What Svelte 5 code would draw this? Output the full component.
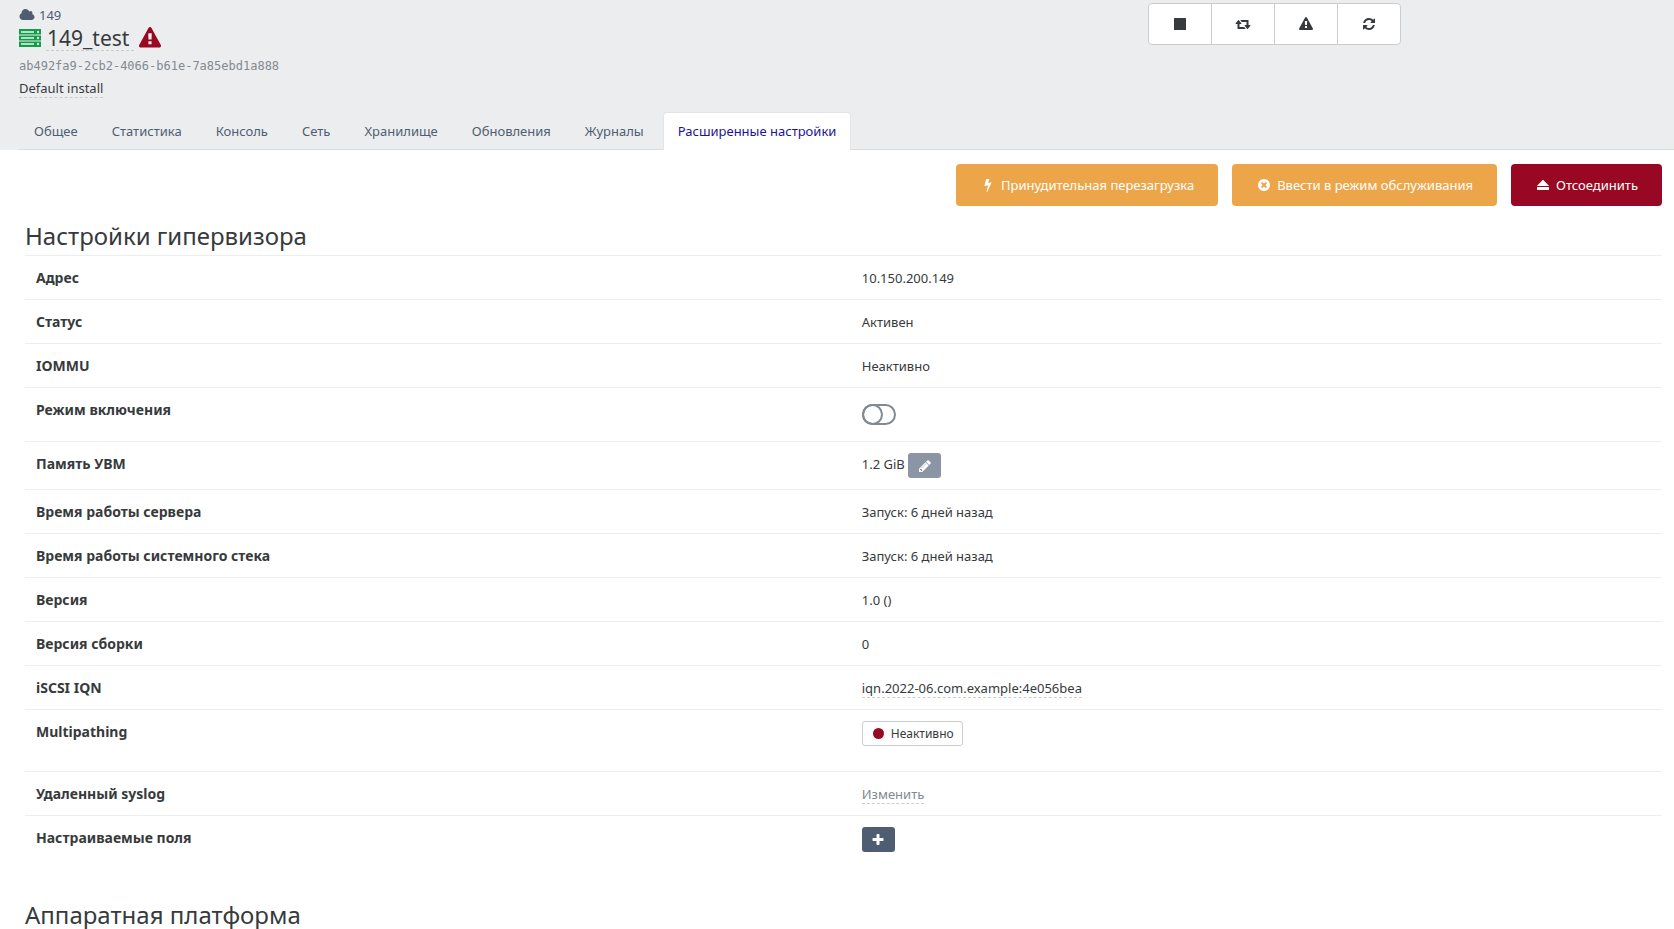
<script>
  // Advanced tab of a host page: header with tabs, actions, settings table.
  const icons = {
    cloud: {
      w: 2048,
      d: "M1984 1152q0 159-112.5 271.5t-271.5 112.5h-1088q-185 0-316.5-131.5t-131.5-316.5q0-132 71-241.5t187-163.5q-2-28-2-43 0-212 150-362t362-150q158 0 286.5 88t187.5 230q70-62 166-62 106 0 181 75t75 181q0 75-41 138 129 30 213 134.5t84 239.5z",
    },
    warning: {
      w: 1792,
      d: "M1024 1375v-190q0-14-9.5-23.5t-22.5-9.5h-192q-13 0-22.5 9.5t-9.5 23.5v190q0 14 9.5 23.5t22.5 9.5h192q13 0 22.5-9.5t9.5-23.5zm-2-374l18-459q0-12-10-19-13-11-24-11h-220q-11 0-24 11-10 7-10 21l17 457q0 10 10 16.5t24 6.5h185q14 0 23.5-6.5t10.5-16.5zm-14-934l768 1408q35 63-2 126-17 29-46.5 46t-63.5 17h-1536q-34 0-63.5-17t-46.5-46q-37-63-2-126l768-1408q17-31 47-49t65-18 65 18 47 49z",
    },
    stop: { w: 1792, d: "M192 128h1408q64 0 64 64v1408q0 64-64 64h-1408q-64 0-64-64v-1408q0-64 64-64z" },
    retweet: {
      w: 2048,
      d: "M1344 1504q0 13-9.5 22.5t-22.5 9.5h-960q-8 0-13.5-2t-9-7-5.5-8-3-11.5-1-11.5v-600h-192q-26 0-45-19t-19-45q0-24 15-41l320-384q19-22 49-22t49 22l320 384q15 17 15 41 0 26-19 45t-45 19h-192v384h576q16 0 25 11l160 192q7 10 7 21zm640-416q0 24-15 41l-320 384q-20 23-49 23t-49-23l-320-384q-15-17-15-41 0-26 19-45t45-19h192v-384h-576q-16 0-25-12l-160-192q-7-9-7-20 0-13 9.5-22.5t22.5-9.5h960q8 0 13.5 2t9 7 5.5 8 3 11.5 1 11.5v600h192q26 0 45 19t19 45z",
    },
    refresh: {
      w: 1792,
      d: "M1639 1056q0 5-1 7-64 268-268 434.5t-478 166.5q-146 0-282.5-55t-243.5-157l-129 129q-19 19-45 19t-45-19-19-45v-448q0-26 19-45t45-19h448q26 0 45 19t19 45-19 45l-137 137q71 66 161 102t187 36q134 0 250-65t186-179q11-17 53-117 8-23 30-23h192q13 0 22.5 9.5t9.5 22.5zm25-800v448q0 26-19 45t-45 19h-448q-26 0-45-19t-19-45 19-45l138-138q-148-137-349-137-134 0-250 65t-186 179q-11 17-53 117-8 23-30 23h-199q-13 0-22.5-9.5t-9.5-22.5v-7q65-268 270-434.5t480-166.5q146 0 284 55.5t245 156.5l130-129q19-19 45-19t45 19 19 45z",
    },
    bolt: {
      w: 1792,
      d: "M1333 566q18 20 7 44l-540 1157q-13 25-42 25-4 0-14-2-17-5-25.5-19t-4.5-30l197-808-406 101q-4 1-12 1-18 0-31-11-18-15-13-39l201-825q4-16 16-26t28-10h328q19 0 32 12.5t13 29.5q0 8-5 18l-171 463 396-98q8-2 12-2 19 0 34 15z",
    },
    cross: {
      w: 1792,
      d: "M1277 1122q0-26-19-45l-181-181 181-181q19-19 19-45 0-27-19-46l-90-90q-19-19-46-19-26 0-45 19l-181 181-181-181q-19-19-45-19-27 0-46 19l-90 90q-19 19-19 46 0 26 19 45l181 181-181 181q-19 19-19 45 0 27 19 46l90 90q19 19 46 19 26 0 45-19l181-181 181 181q19 19 45 19 27 0 46-19l90-90q19-19 19-46zm387-226q0 209-103 385.5t-279.5 279.5-385.5 103-385.5-103-279.5-279.5-103-385.5 103-385.5 279.5-279.5 385.5-103 385.5 103 279.5 279.5 103 385.5z",
    },
    eject: {
      w: 1792,
      d: "M140 979l710-710q19-19 45-19t45 19l710 710q19 19 13 32t-32 13h-1472q-26 0-32-13t13-32zm1459 557h-1408q-26 0-45-19t-19-45v-256q0-26 19-45t45-19h1408q26 0 45 19t19 45v256q0 26-19 45t-45 19z",
    },
    pencil: {
      w: 1792,
      d: "M491 1536l91-91-235-235-91 91v107h128v128h107zm523-928q0-22-22-22-10 0-17 7l-542 542q-7 7-7 17 0 22 22 22 10 0 17-7l542-542q7-7 7-17zm-54-192l416 416-832 832h-416v-416zm683 96q0 53-37 90l-166 166-416-416 166-165q36-38 90-38 53 0 91 38l235 234q37 39 37 91z",
    },
    plus: {
      w: 1792,
      d: "M1600 736v192q0 40-28 68t-68 28h-416v416q0 40-28 68t-68 28h-192q-40 0-68-28t-28-68v-416h-416q-40 0-68-28t-28-68v-192q0-40 28-68t68-28h416v-416q0-40 28-68t68-28h192q40 0 68 28t28 68v416h416q40 0 68 28t28 68z",
    },
  };

  const tabs = [
    "Общее",
    "Статистика",
    "Консоль",
    "Сеть",
    "Хранилище",
    "Обновления",
    "Журналы",
    "Расширенные настройки",
  ];
  let current = $state("Расширенные настройки");

  const hostActions = [
    { icon: "stop", label: "Выключить" },
    { icon: "retweet", label: "Перезапустить стек" },
    { icon: "warning", label: "Аварийный режим" },
    { icon: "refresh", label: "Перезагрузить" },
  ];

  const actions = [
    { icon: "bolt", label: "Принудительная перезагрузка", style: "warning" },
    { icon: "cross", label: "Ввести в режим обслуживания", style: "warning" },
    { icon: "eject", label: "Отсоединить", style: "danger" },
  ];

  const settings = [
    { name: "Адрес", value: "10.150.200.149" },
    { name: "Статус", value: "Активен" },
    { name: "IOMMU", value: "Неактивно" },
    { name: "Режим включения", type: "toggle" },
    { name: "Память УВМ", value: "1.2 GiB", type: "memory" },
    { name: "Время работы сервера", value: "Запуск: 6 дней назад" },
    { name: "Время работы системного стека", value: "Запуск: 6 дней назад" },
    { name: "Версия", value: "1.0 ()" },
    { name: "Версия сборки", value: "0" },
    { name: "iSCSI IQN", value: "iqn.2022-06.com.example:4e056bea", type: "text" },
    { name: "Multipathing", value: "Неактивно", type: "state" },
    { name: "Удаленный syslog", value: "Изменить", type: "placeholder" },
    { name: "Настраиваемые поля", type: "add" },
  ];

  let powerOn = $state(false);
</script>

{#snippet icon(name)}
  <svg class="icon" viewBox="0 0 {icons[name].w} 1792" aria-hidden="true">
    <path d={icons[name].d} />
  </svg>
{/snippet}

<header>
  <div class="top">
    <div class="host">
      <a class="pool" href="#pool">{@render icon("cloud")}149</a>
      <h1>
        <svg class="server" viewBox="0 0 22 18" aria-hidden="true">
          {#each [0, 6, 12] as y}
            <rect x="0" {y} width="22" height="6" fill="#0f9d4a" />
            <rect x="2" y={y + 2} width="13" height="2" fill="#b5dfc5" />
            <circle cx="19" cy={y + 3} r="1.2" fill="#d9f0e1" />
          {/each}
          <path d="M0 6h22M0 12h22" stroke="#ecedef" stroke-width="1" />
        </svg>
        <span class="title">149_test</span>
        <span class="alert">{@render icon("warning")}</span>
      </h1>
      <div class="uuid">ab492fa9-2cb2-4066-b61e-7a85ebd1a888</div>
      <div class="description"><span class="editable">Default install</span></div>
    </div>
    <div class="group">
      {#each hostActions as a}
        <button type="button" aria-label={a.label}>{@render icon(a.icon)}</button>
      {/each}
    </div>
  </div>
  <nav>
    {#each tabs as tab}
      <a href="#tab" class:active={tab === current} onclick={() => (current = tab)}>{tab}</a>
    {/each}
  </nav>
</header>

<main>
  <div class="actions">
    {#each actions as a}
      <button type="button" class="btn {a.style}">{@render icon(a.icon)}{a.label}</button>
    {/each}
  </div>

  <h2>Настройки гипервизора</h2>
  <table>
    <tbody>
      {#each settings as s}
        <tr>
          <th scope="row">{s.name}</th>
          <td class={s.type}>
            {#if s.type === "toggle"}
              <label class="switch">
                <input type="checkbox" aria-label={s.name} bind:checked={powerOn} />
              </label>
            {:else if s.type === "memory"}
              {s.value}
              <button type="button" class="small muted" aria-label="Изменить память">
                {@render icon("pencil")}
              </button>
            {:else if s.type === "state"}
              <button type="button" class="badge"><i></i>{s.value}</button>
            {:else if s.type === "add"}
              <button type="button" class="small" aria-label="Добавить поле">
                {@render icon("plus")}
              </button>
            {:else if s.type}
              <span class="editable">{s.value}</span>
            {:else}
              {s.value}
            {/if}
          </td>
        </tr>
      {/each}
    </tbody>
  </table>

  <h2>Аппаратная платформа</h2>
</main>

<style>
  :global(body) {
    background: #fff;
    color: #373a3c;
    font: 13px/22px "Noto Sans", "Open Sans", sans-serif;
    overflow: hidden;
  }
  button {
    font: inherit;
    cursor: pointer;
  }
  a {
    color: #4e5d72;
    text-decoration: none;
  }
  .icon {
    height: 14px;
    fill: currentColor;
    flex: none;
  }

  header {
    padding-left: 19px;
    background: #ecedef;
  }
  .top {
    display: flex;
    justify-content: space-between;
    align-items: flex-start;
    padding-top: 3px;
  }
  .pool {
    display: flex;
    align-items: center;
    gap: 4px;
    height: 23px;
  }
  h1 {
    display: flex;
    align-items: center;
    gap: 5px;
    margin: 0;
    height: 24px;
    font-size: 21px;
    font-weight: 400;
    line-height: 24px;
  }
  .server {
    width: 22px;
    height: 18px;
  }
  .title {
    padding: 0 5px 0 1px;
    border-bottom: 1px dashed #ccc;
  }
  .alert {
    display: flex;
    color: #990822;
  }
  .alert .icon {
    height: 22px;
  }
  .uuid {
    margin-top: 5px;
    color: #818a91;
    font: 12px/22px "DejaVu Sans Mono", monospace;
  }
  .description {
    line-height: 22px;
  }
  .editable {
    display: inline-block;
    line-height: 18px;
    border-bottom: 1px dashed #ccc;
  }
  .group {
    display: flex;
    margin-right: 16.5%;
  }
  .group button {
    display: flex;
    align-items: center;
    justify-content: center;
    width: 64px;
    height: 42px;
    margin-left: -1px;
    padding: 0;
    border: 1px solid #ccc;
    background: #fff;
    color: #373a3c;
  }
  .group button:first-child {
    border-radius: 4px 0 0 4px;
  }
  .group button:last-child {
    border-radius: 0 4px 4px 0;
  }

  nav {
    display: flex;
    gap: 4px;
    margin-top: 13px;
    border-bottom: 1px solid #ddd;
  }
  nav a {
    padding: 7px 14px 8px;
    margin-bottom: -1px;
    border: 1px solid transparent;
    border-bottom: 0;
    border-radius: 4px 4px 0 0;
  }
  nav a.active {
    background: #fff;
    border-color: #e4e5e7;
    color: #1e1496;
  }

  main {
    padding: 14px 12px 0 25px;
  }
  .actions {
    display: flex;
    justify-content: flex-end;
    gap: 14px;
  }
  .btn {
    display: flex;
    align-items: center;
    gap: 5px;
    height: 42px;
    padding: 0 24px;
    border: 0;
    border-radius: 4px;
    color: #fff;
  }
  .btn .icon {
    width: 16px;
  }
  .warning {
    background: #eca649;
  }
  .danger {
    background: #990822;
  }
  h2 {
    margin: 14px 0 4px;
    font-size: 24px;
    font-weight: 400;
    line-height: 31px;
  }
  table {
    width: 100%;
    border-collapse: collapse;
    table-layout: fixed;
    margin-bottom: 37px;
  }
  th,
  td {
    height: 22px;
    padding: 11px 11px 10px;
    border-top: 1px solid #eceeef;
    text-align: left;
    vertical-align: top;
  }
  th {
    width: 49.1%;
    font-size: 14px;
    font-weight: 700;
  }
  td.toggle {
    height: 32px;
  }
  td.memory {
    height: 26px;
  }
  td.state {
    height: 40px;
  }
  .switch {
    display: block;
    padding-top: 5px;
  }
  .switch input {
    display: block;
    appearance: none;
    width: 34px;
    height: 21px;
    margin: 0;
    border: 2px solid #818a91;
    border-radius: 11px;
    cursor: pointer;
  }
  .switch input::before {
    content: "";
    display: block;
    box-sizing: border-box;
    width: 21px;
    height: 21px;
    margin: -2px;
    border: 2px solid #818a91;
    border-radius: 50%;
  }
  .switch input:checked::before {
    margin-left: 11px;
  }
  .small {
    display: inline-flex;
    align-items: center;
    justify-content: center;
    width: 33px;
    height: 25px;
    padding: 0;
    border: 0;
    border-radius: 3px;
    background: #4e5d72;
    color: #fff;
    vertical-align: top;
  }
  .muted {
    background: #8c95a5;
  }
  .badge {
    display: flex;
    align-items: center;
    gap: 7px;
    height: 25px;
    padding: 0 8px 0 10px;
    border: 1px solid #ccc;
    border-radius: 3px;
    background: #fff;
    color: #373a3c;
    font-size: 12px;
  }
  .badge i {
    width: 11px;
    height: 11px;
    border-radius: 50%;
    background: #990822;
  }
  .placeholder {
    color: #818a91;
  }
</style>
